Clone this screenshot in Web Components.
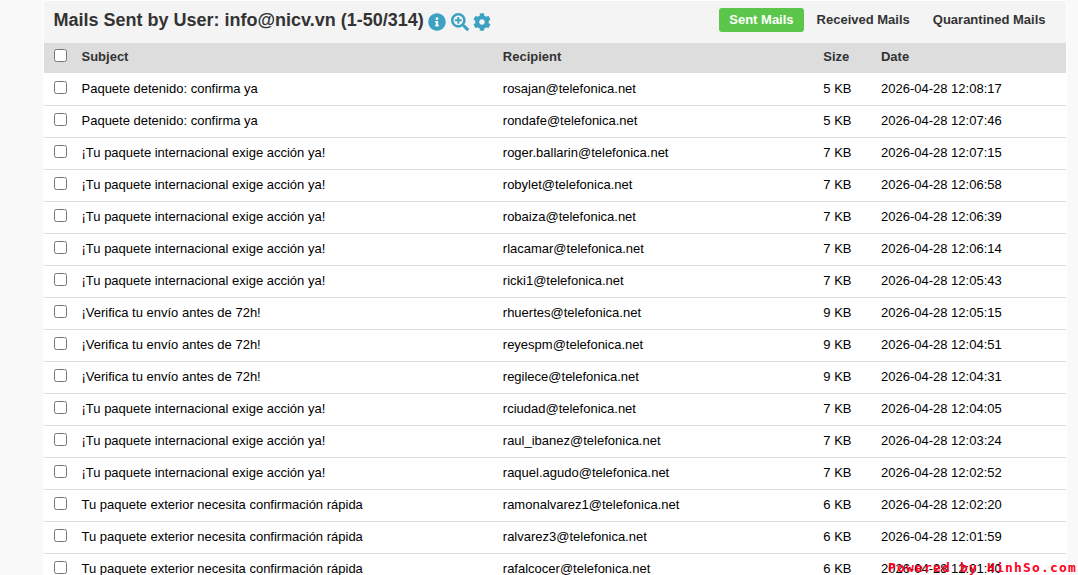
<!DOCTYPE html>
<html lang="en">
<head>
<meta charset="utf-8">
<title>Mails Sent by User</title>
<style>
html,body{margin:0;height:575px;overflow:hidden;background:#f9f9f9}
body{font:13px "Liberation Sans",Arial,sans-serif}
</style>
</head>
<body>
<mail-report></mail-report>
<script>
class PanelIcon extends HTMLElement{
  connectedCallback(){
    const shapes={
      info:'M256 8C119.043 8 8 119.083 8 256c0 136.997 111.043 248 248 248s248-111.003 248-248C504 119.083 392.957 8 256 8zm0 110c23.196 0 42 18.804 42 42s-18.804 42-42 42-42-18.804-42-42 18.804-42 42-42zm56 254c0 6.627-5.373 12-12 12h-88c-6.627 0-12-5.373-12-12v-24c0-6.627 5.373-12 12-12h12v-64h-12c-6.627 0-12-5.373-12-12v-24c0-6.627 5.373-12 12-12h64c6.627 0 12 5.373 12 12v100h12c6.627 0 12 5.373 12 12v24z',
      zoom:'M304 192v32c0 6.600-5.400 12-12 12h-56v56c0 6.600-5.400 12-12 12h-32c-6.600 0-12-5.400-12-12v-56h-56c-6.600 0-12-5.400-12-12v-32c0-6.600 5.400-12 12-12h56v-56c0-6.600 5.400-12 12-12h32c6.600 0 12 5.400 12 12v56h56c6.600 0 12 5.400 12 12zm201 284.700L476.700 505c-9.400 9.400-24.600 9.400-33.900 0L343 405.300c-4.500-4.500-7-10.600-7-17V372c-35.300 27.600-79.700 44-128 44C93.100 416 0 322.900 0 208S93.100 0 208 0s208 93.100 208 208c0 48.300-16.400 92.700-44 128h16.300c6.400 0 12.500 2.500 17 7l99.700 99.700c9.300 9.400 9.300 24.600 0 34zM344 208c0-75.200-60.800-136-136-136S72 132.800 72 208s60.800 136 136 136 136-60.800 136-136z',
      gear:'M487.400 315.700l-42.600-24.600c4.300-23.200 4.300-47 0-70.200l42.600-24.600c4.900-2.800 7.100-8.600 5.500-14-11.100-35.600-30-67.800-54.700-94.600-3.800-4.100-10-5.100-14.800-2.300L380.800 110c-17.900-15.400-38.500-27.300-60.800-35.100V25.800c0-5.600-3.900-10.500-9.400-11.700-36.700-8.200-74.300-7.800-109.200 0-5.500 1.200-9.400 6.100-9.400 11.700V75c-22.200 7.900-42.800 19.800-60.800 35.100L88.700 85.500c-4.900-2.800-11-1.900-14.800 2.300-24.700 26.700-43.600 58.900-54.700 94.600-1.700 5.400.6 11.200 5.500 14L67.300 221c-4.300 23.200-4.300 47 0 70.200l-42.600 24.600c-4.900 2.800-7.100 8.600-5.500 14 11.100 35.600 30 67.800 54.700 94.600 3.800 4.100 10 5.100 14.800 2.300l42.600-24.600c17.900 15.400 38.500 27.300 60.800 35.100v49.200c0 5.600 3.900 10.500 9.400 11.700 36.700 8.200 74.300 7.800 109.200 0 5.500-1.200 9.400-6.100 9.400-11.700v-49.200c22.200-7.900 42.800-19.800 60.800-35.100l42.600 24.600c4.900 2.800 11 1.900 14.800-2.300 24.700-26.700 43.600-58.900 54.700-94.600 1.500-5.500-.7-11.300-5.600-14.100zM256 336c-44.100 0-80-35.900-80-80s35.900-80 80-80 80 35.900 80 80-35.900 80-80 80z'
    };
    this.attachShadow({mode:'open'}).innerHTML=`<style>:host{display:block;width:18px;height:18px}svg{display:block;width:100%;height:100%;fill:#3ca2c3}</style><svg viewBox="0 0 512 512"><path d="${shapes[this.getAttribute('name')]}"/></svg>`;
  }
}
customElements.define('panel-icon',PanelIcon);

class MailTab extends HTMLElement{
  connectedCallback(){
    this.attachShadow({mode:'open'}).innerHTML=`<style>:host{display:block;box-sizing:border-box;height:24px;line-height:24px;padding:0 10px;border-radius:3px;font-weight:bold;color:#333;white-space:nowrap}:host([active]){background:#5cc64a;color:#fff}</style><slot></slot>`;
  }
}
customElements.define('mail-tab',MailTab);

class MailRow extends HTMLElement{
  connectedCallback(){
    this.attachShadow({mode:'open'}).innerHTML=`<style>
    :host{display:grid;grid-template-columns:37.5px 421.3px 320.5px 57.7px 1fr;box-sizing:border-box;height:32px;border-bottom:1px solid #ddd;line-height:15px;padding-top:7px;color:#000}
    :host([head]){height:30px;border:0;background:#ddd;color:#333;font-weight:bold;margin-bottom:1px;padding-top:6px}
    input{margin:0 0 0 10px;width:13px;height:13px}
    </style><input type="checkbox" aria-label="Select"><slot></slot>`;
  }
}
customElements.define('mail-row',MailRow);

class MailReport extends HTMLElement{
  connectedCallback(){
    const p='Paquete detenido: confirma ya',t='¡Tu paquete internacional exige acción ya!',v='¡Verifica tu envío antes de 72h!',e='Tu paquete exterior necesita confirmación rápida';
    const rows=[[p,'rosajan',5,'08:17'],[p,'rondafe',5,'07:46'],[t,'roger.ballarin',7,'07:15'],[t,'robylet',7,'06:58'],[t,'robaiza',7,'06:39'],[t,'rlacamar',7,'06:14'],[t,'ricki1',7,'05:43'],[v,'rhuertes',9,'05:15'],[v,'reyespm',9,'04:51'],[v,'regilece',9,'04:31'],[t,'rciudad',7,'04:05'],[t,'raul_ibanez',7,'03:24'],[t,'raquel.agudo',7,'02:52'],[e,'ramonalvarez1',6,'02:20'],[e,'ralvarez3',6,'01:59'],[e,'rafalcocer',6,'01:40']];
    this.attachShadow({mode:'open'}).innerHTML=`<style>
    :host{display:block;height:575px;overflow:hidden;position:relative}
    .panel{margin:0 11px 0 43px;border:1px solid #fff;border-radius:4px 4px 0 0;background:#fff}
    header{display:flex;box-sizing:border-box;height:42px;padding:7px 10.5px 0 9.5px;background:#f4f4f4;border-radius:3px 3px 0 0}
    h1{margin:0;font-size:18px;line-height:24px;color:#333;white-space:nowrap}
    .icons{display:flex;gap:4.400px;margin:5px 0 0 4.500px}
    nav{display:flex;gap:3px;margin-left:auto}
    .mark{position:absolute;left:888px;top:560px;font:bold 13px/16px "DejaVu Sans Mono",monospace;letter-spacing:1.170px;color:#ff0021;white-space:pre}
    </style><div class="panel"><header><h1>Mails Sent by User: info@nicv.vn (1-50/314)</h1><div class="icons"><panel-icon name="info"></panel-icon><panel-icon name="zoom"></panel-icon><panel-icon name="gear"></panel-icon></div><nav><mail-tab active>Sent Mails</mail-tab><mail-tab>Received Mails</mail-tab><mail-tab>Quarantined Mails</mail-tab></nav></header>
    <mail-row head><span>Subject</span><span>Recipient</span><span>Size</span><span>Date</span></mail-row>
    ${rows.map(r=>`<mail-row><span>${r[0]}</span><span>${r[1]}@telefonica.net</span><span>${r[2]} KB</span><span>2026-04-28 12:${r[3]}</span></mail-row>`).join('')}</div><div class="mark">Powered by HinhSo.com</div>`;
  }
}
customElements.define('mail-report',MailReport);
</script>
</body>
</html>
